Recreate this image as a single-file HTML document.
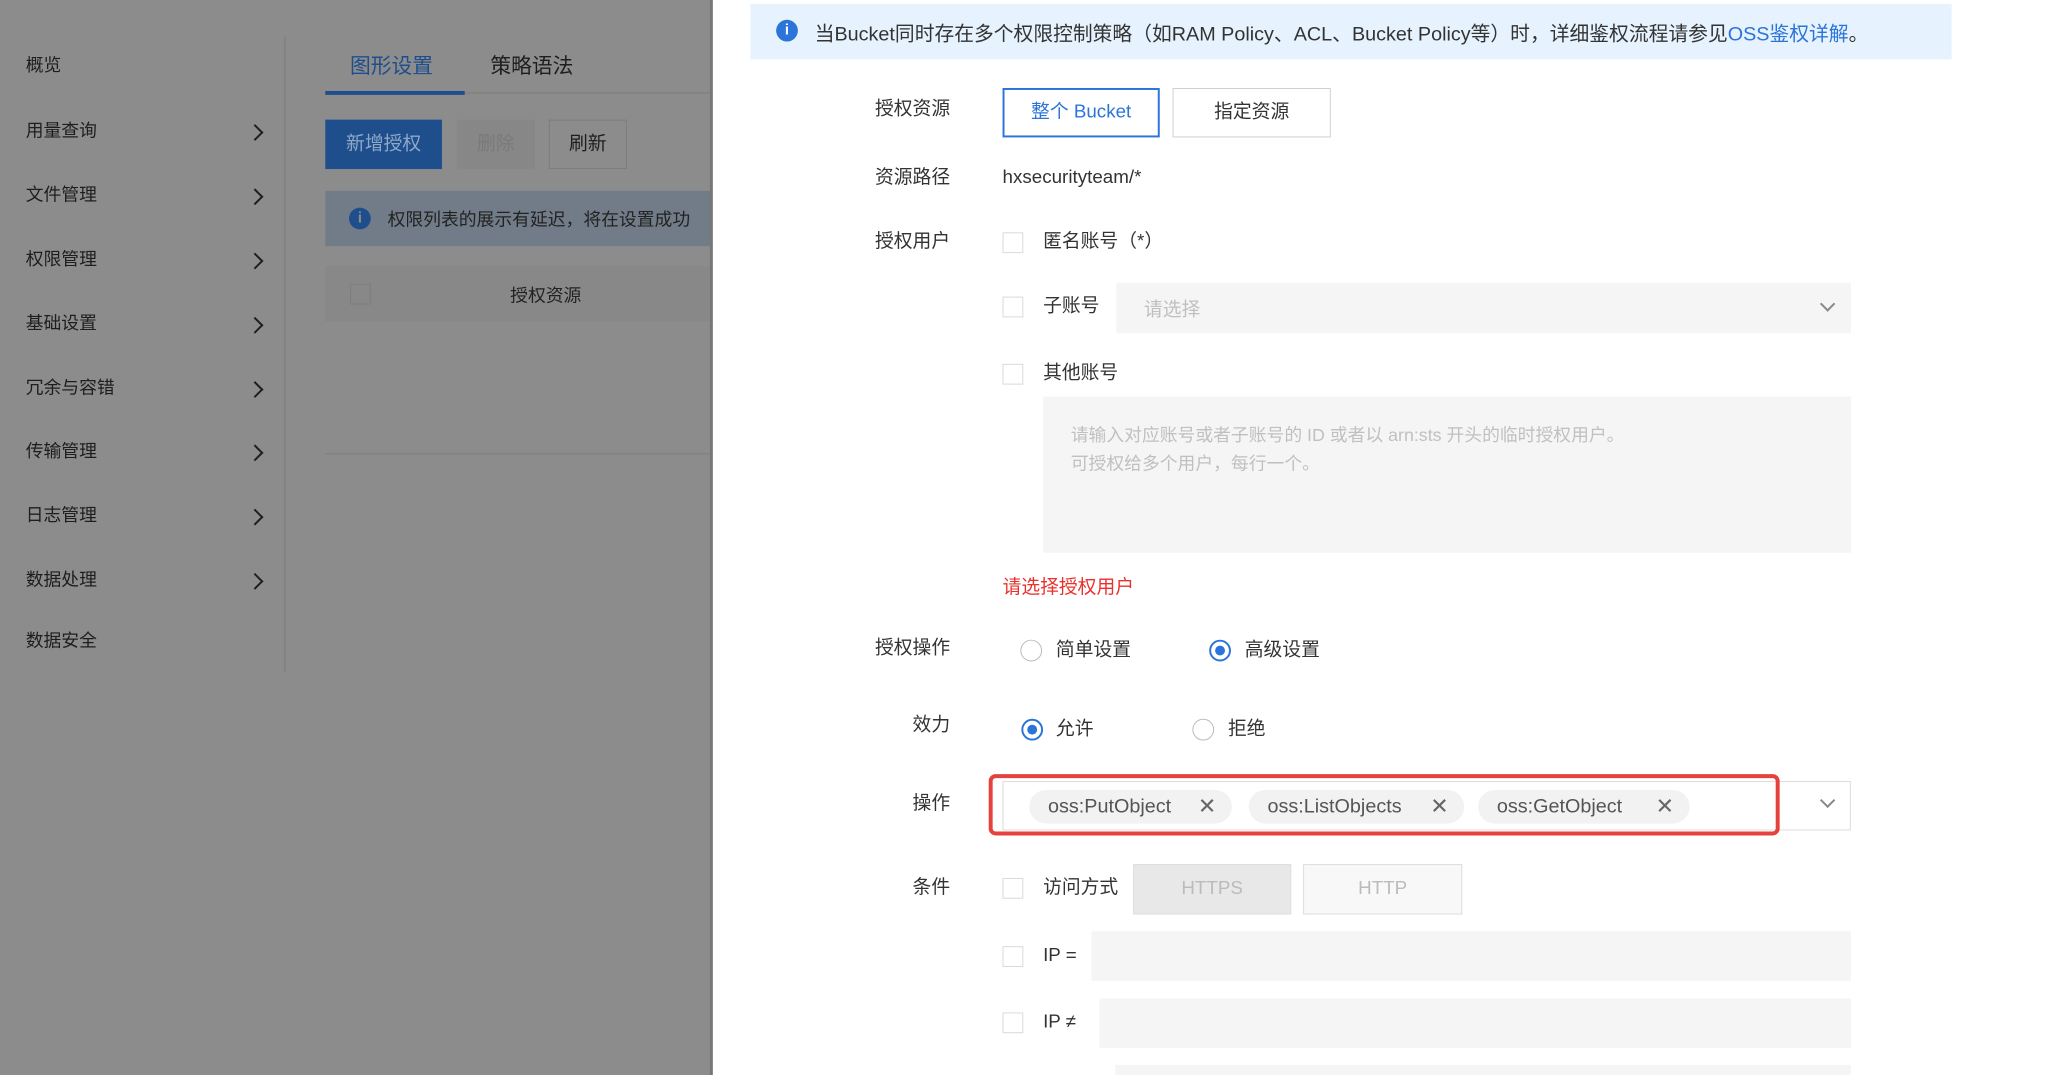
<!DOCTYPE html>
<html><head><meta charset="utf-8"><style>
*{margin:0;padding:0;box-sizing:border-box}
html,body{width:2054px;height:1075px;overflow:hidden}
body{background:#fff;font-family:"Liberation Sans","Noto Sans CJK SC",sans-serif;position:relative;color:#333}
#w{position:absolute;left:0;top:0;width:2078px;height:1088px;overflow:hidden;transform:scale(0.9887);transform-origin:0 0}
.a{position:absolute;white-space:nowrap}
.ov{position:absolute;left:0;top:0;width:720px;height:1100px;background:#8c8c8c;overflow:hidden}
.sb{position:absolute;left:26px;font-size:18px;color:#1e1e1e;line-height:24px}
.chev{position:absolute;left:252px;width:12px;height:12px;border-right:2.5px solid #1e1e1e;border-top:2.5px solid #1e1e1e;transform:rotate(45deg)}
.lbl{position:absolute;right:1117px;font-size:19px;color:#333;line-height:26px;white-space:nowrap}
.t{font-size:19px;color:#333;line-height:26px}
.cb{position:absolute;width:21px;height:21px;border:1.5px solid #d9d9d9;background:#fff}
.rd{position:absolute;width:22px;height:22px;border:1.5px solid #bbb;border-radius:50%;background:#fff}
.rd.on{border:2px solid #2b74d9}
.rd.on:after{content:"";position:absolute;left:4px;top:4px;width:10px;height:10px;border-radius:50%;background:#2b74d9}
.inp{position:absolute;background:#f5f5f5}
.tag{position:absolute;top:799px;height:34px;border-radius:17px;background:#f2f2f2;font-size:20px;color:#555;line-height:34px;padding-left:19px}
.tag i{font-style:normal;position:absolute;right:16px;top:0;font-size:22px;color:#666}
.dchev{position:absolute;width:11px;height:11px;border-right:2px solid #888;border-bottom:2px solid #888;transform:rotate(45deg)}
</style></head><body><div id="w">
<div class="ov">
  <div class="sb" style="top:54px">概览</div>
  <div class="sb" style="top:120px">用量查询</div><div class="chev" style="top:128px"></div>
  <div class="sb" style="top:185px">文件管理</div><div class="chev" style="top:193px"></div>
  <div class="sb" style="top:250px">权限管理</div><div class="chev" style="top:258px"></div>
  <div class="sb" style="top:315px">基础设置</div><div class="chev" style="top:323px"></div>
  <div class="sb" style="top:380px">冗余与容错</div><div class="chev" style="top:388px"></div>
  <div class="sb" style="top:444px">传输管理</div><div class="chev" style="top:452px"></div>
  <div class="sb" style="top:509px">日志管理</div><div class="chev" style="top:517px"></div>
  <div class="sb" style="top:574px">数据处理</div><div class="chev" style="top:582px"></div>
  <div class="sb" style="top:636px">数据安全</div>
  <div style="position:absolute;left:287px;top:37px;width:2px;height:643px;background:#838383"></div>
  <div class="a" style="left:354px;top:51px;font-size:21px;color:#1f4e8c">图形设置</div>
  <div class="a" style="left:496px;top:51px;font-size:21px;color:#1e1e1e">策略语法</div>
  <div style="position:absolute;left:329px;top:93px;width:391px;height:2px;background:#848484"></div>
  <div style="position:absolute;left:329px;top:92px;width:141px;height:4px;background:#1f4e8c"></div>
  <div class="a" style="left:329px;top:121px;width:118px;height:50px;background:#1f4e8c;color:#8ea8c8;font-size:19px;line-height:50px;text-align:center">新增授权</div>
  <div class="a" style="left:462px;top:121px;width:79px;height:50px;background:#878787;color:#7a7a7a;font-size:19px;line-height:50px;text-align:center">删除</div>
  <div class="a" style="left:555px;top:121px;width:79px;height:50px;border:1.5px solid #7d7d7d;color:#1e1e1e;font-size:19px;line-height:47px;text-align:center">刷新</div>
  <div class="a" style="left:329px;top:193px;width:400px;height:56px;background:#717c88"></div>
  <div class="a" style="left:353px;top:210px;width:22px;height:22px;border-radius:50%;background:#1f4e8c;color:#8c8c8c;font-size:15px;font-weight:bold;text-align:center;line-height:22px">i</div>
  <div class="a" style="left:392px;top:208px;font-size:18px;color:#222">权限列表的展示有延迟，将在设置成功</div>
  <div class="a" style="left:329px;top:269px;width:400px;height:56px;background:#888"></div>
  <div class="a" style="left:354px;top:287px;width:21px;height:21px;border:1.5px solid #7d7d7d"></div>
  <div class="a" style="left:516px;top:285px;font-size:18px;color:#222">授权资源</div>
  <div class="a" style="left:329px;top:458px;width:400px;height:1.5px;background:#848484"></div>
</div>
<div style="position:absolute;left:718px;top:0;width:3px;height:1100px;background:#777"></div>

<div class="a" style="left:759px;top:4px;width:1215px;height:56px;background:#e6f2fd"></div>
<div class="a" style="left:785px;top:20px;width:22px;height:22px;border-radius:50%;background:#2b74d9;color:#fff;font-size:15px;font-weight:bold;text-align:center;line-height:22px">i</div>
<div class="a" style="left:824px;top:18px;font-size:20px;color:#333">当Bucket同时存在多个权限控制策略（如RAM Policy、ACL、Bucket Policy等）时，详细鉴权流程请参见<span style="color:#2b74d9">OSS鉴权详解</span>。</div>

<div class="lbl" style="top:98px">授权资源</div>
<div class="a" style="left:1014px;top:89px;width:159px;height:50px;border:2px solid #2b74d9;color:#2b74d9;font-size:19px;line-height:46px;text-align:center">整个 Bucket</div>
<div class="a" style="left:1186px;top:89px;width:160px;height:50px;border:1.5px solid #d0d0d0;color:#333;font-size:19px;line-height:47px;text-align:center">指定资源</div>

<div class="lbl" style="top:167px">资源路径</div>
<div class="a t" style="left:1014px;top:167px">hxsecurityteam/*</div>

<div class="lbl" style="top:232px">授权用户</div>
<div class="cb" style="left:1014px;top:235px"></div>
<div class="a t" style="left:1055px;top:232px">匿名账号（*）</div>
<div class="cb" style="left:1014px;top:300px"></div>
<div class="a t" style="left:1055px;top:297px">子账号</div>
<div class="inp" style="left:1129px;top:286px;width:743px;height:51px"></div>
<div class="a" style="left:1157px;top:298px;font-size:19px;color:#c0c0c0">请选择</div>
<div class="dchev" style="left:1843px;top:302px"></div>
<div class="cb" style="left:1014px;top:368px"></div>
<div class="a t" style="left:1055px;top:365px">其他账号</div>
<div class="inp" style="left:1055px;top:401px;width:817px;height:158px"></div>
<div class="a" style="left:1083px;top:426px;font-size:18px;color:#c0c0c0">请输入对应账号或者子账号的 ID 或者以 arn:sts 开头的临时授权用户。</div>
<div class="a" style="left:1083px;top:455px;font-size:18px;color:#c0c0c0">可授权给多个用户，每行一个。</div>
<div class="a" style="left:1014px;top:579px;font-size:19px;color:#e8322d">请选择授权用户</div>

<div class="lbl" style="top:643px">授权操作</div>
<div class="rd" style="left:1032px;top:647px"></div>
<div class="a t" style="left:1068px;top:645px">简单设置</div>
<div class="rd on" style="left:1223px;top:647px"></div>
<div class="a t" style="left:1259px;top:645px">高级设置</div>

<div class="lbl" style="top:721px">效力</div>
<div class="rd on" style="left:1033px;top:727px"></div>
<div class="a t" style="left:1068px;top:725px">允许</div>
<div class="rd" style="left:1206px;top:727px"></div>
<div class="a t" style="left:1242px;top:725px">拒绝</div>

<div class="lbl" style="top:800px">操作</div>
<div class="a" style="left:1014px;top:790px;width:858px;height:50px;border:1.5px solid #dcdcdc;background:#fff"></div>
<div class="dchev" style="left:1843px;top:804px"></div>
<div class="a" style="left:1000px;top:783px;width:800px;height:62px;border:4px solid #e5413d;border-radius:7px"></div>
<div class="tag" style="left:1041px;width:205px">oss:PutObject<i>✕</i></div>
<div class="tag" style="left:1263px;width:218px">oss:ListObjects<i>✕</i></div>
<div class="tag" style="left:1495px;width:214px">oss:GetObject<i>✕</i></div>

<div class="lbl" style="top:885px">条件</div>
<div class="cb" style="left:1014px;top:888px"></div>
<div class="a t" style="left:1055px;top:885px">访问方式</div>
<div class="a" style="left:1146px;top:874px;width:160px;height:51px;background:#e8e8e8;border:1.5px solid #ddd;color:#bbb;font-size:19px;line-height:48px;text-align:center">HTTPS</div>
<div class="a" style="left:1318px;top:874px;width:161px;height:51px;background:#f8f8f8;border:1.5px solid #ddd;color:#bbb;font-size:19px;line-height:48px;text-align:center">HTTP</div>

<div class="cb" style="left:1014px;top:957px"></div>
<div class="a t" style="left:1055px;top:954px">IP =</div>
<div class="inp" style="left:1104px;top:942px;width:768px;height:50px"></div>
<div class="cb" style="left:1014px;top:1024px"></div>
<div class="a t" style="left:1055px;top:1021px">IP ≠</div>
<div class="inp" style="left:1112px;top:1010px;width:760px;height:50px"></div>
<div class="inp" style="left:1128px;top:1077px;width:744px;height:11px"></div>
</div></body></html>
